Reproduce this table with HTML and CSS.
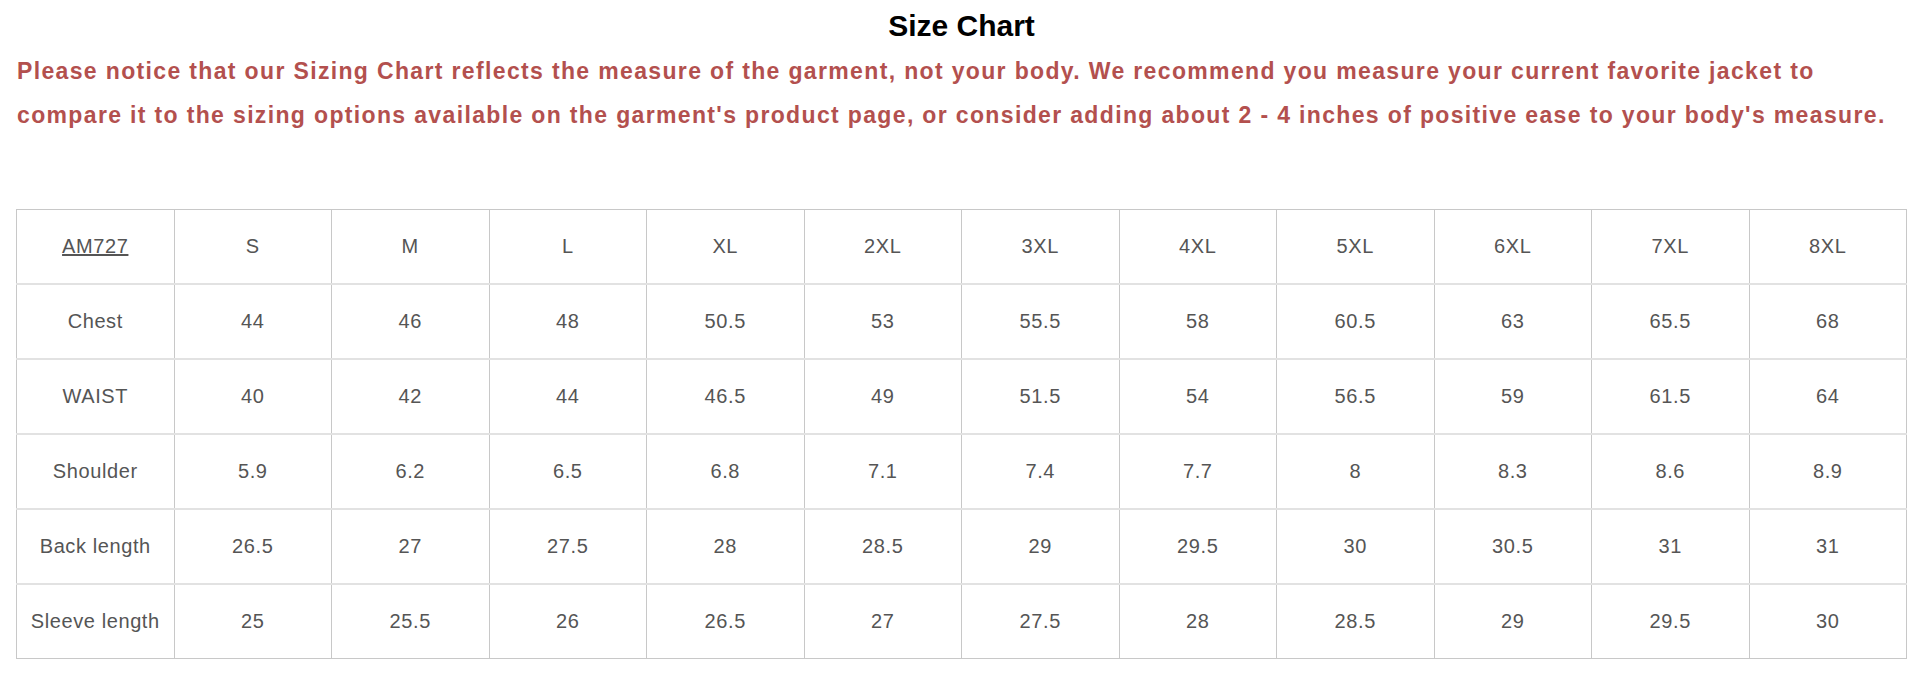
FILE: index.html
```html
<!DOCTYPE html>
<html>
<head>
<meta charset="utf-8">
<title>Size Chart</title>
<link rel="stylesheet" href="styles.css">
</head>
<body>
<div class="page">
  <h2 class="title">Size Chart</h2>
  <p class="notice">Please notice that our Sizing Chart reflects the measure of the garment, not your body. We recommend you measure your current favorite jacket to<br>compare it to the sizing options available on the garment's product page, or consider adding about 2 - 4 inches of positive ease to your body's measure.</p>
  <table class="chart">
    <tr><td><span class="code">AM727</span></td><td>S</td><td>M</td><td>L</td><td>XL</td><td>2XL</td><td>3XL</td><td>4XL</td><td>5XL</td><td>6XL</td><td>7XL</td><td>8XL</td></tr>
    <tr><td>Chest</td><td>44</td><td>46</td><td>48</td><td>50.5</td><td>53</td><td>55.5</td><td>58</td><td>60.5</td><td>63</td><td>65.5</td><td>68</td></tr>
    <tr><td>WAIST</td><td>40</td><td>42</td><td>44</td><td>46.5</td><td>49</td><td>51.5</td><td>54</td><td>56.5</td><td>59</td><td>61.5</td><td>64</td></tr>
    <tr><td>Shoulder</td><td>5.9</td><td>6.2</td><td>6.5</td><td>6.8</td><td>7.1</td><td>7.4</td><td>7.7</td><td>8</td><td>8.3</td><td>8.6</td><td>8.9</td></tr>
    <tr><td>Back length</td><td>26.5</td><td>27</td><td>27.5</td><td>28</td><td>28.5</td><td>29</td><td>29.5</td><td>30</td><td>30.5</td><td>31</td><td>31</td></tr>
    <tr><td>Sleeve length</td><td>25</td><td>25.5</td><td>26</td><td>26.5</td><td>27</td><td>27.5</td><td>28</td><td>28.5</td><td>29</td><td>29.5</td><td>30</td></tr>
  </table>
</div>
</body>
</html>
```
FILE: styles.css
```css
html, body {
  margin: 0;
  padding: 0;
  background: #ffffff;
}
body {
  font-family: "Liberation Sans", Arial, sans-serif;
}
.page {
  padding: 9px 14px 0 16px;
}
.title {
  margin: 0;
  font-size: 30px;
  line-height: 34px;
  font-weight: bold;
  color: #000;
  text-align: center;
}
.notice {
  margin: 6px 0 0 1px;
  font-size: 23px;
  line-height: 44px;
  font-weight: bold;
  letter-spacing: 1.35px;
  color: #b3504e;
  white-space: nowrap;
}
.chart {
  margin-top: 72px;
  width: 100%;
  table-layout: fixed;
  border-collapse: collapse;
  border: 1px solid #c8c8c8;
}
.chart td {
  height: 73px;
  padding: 0;
  text-align: center;
  vertical-align: middle;
  font-size: 20px;
  letter-spacing: 0.6px;
  color: #555;
  border-left: 1px solid #c8c8c8;
  border-right: 1px solid #c8c8c8;
  border-top: 2px solid #e2e2e2;
}
.chart tr:first-child td {
  border-top: 1px solid #c8c8c8;
}
.code {
  text-decoration: underline;
}
```
